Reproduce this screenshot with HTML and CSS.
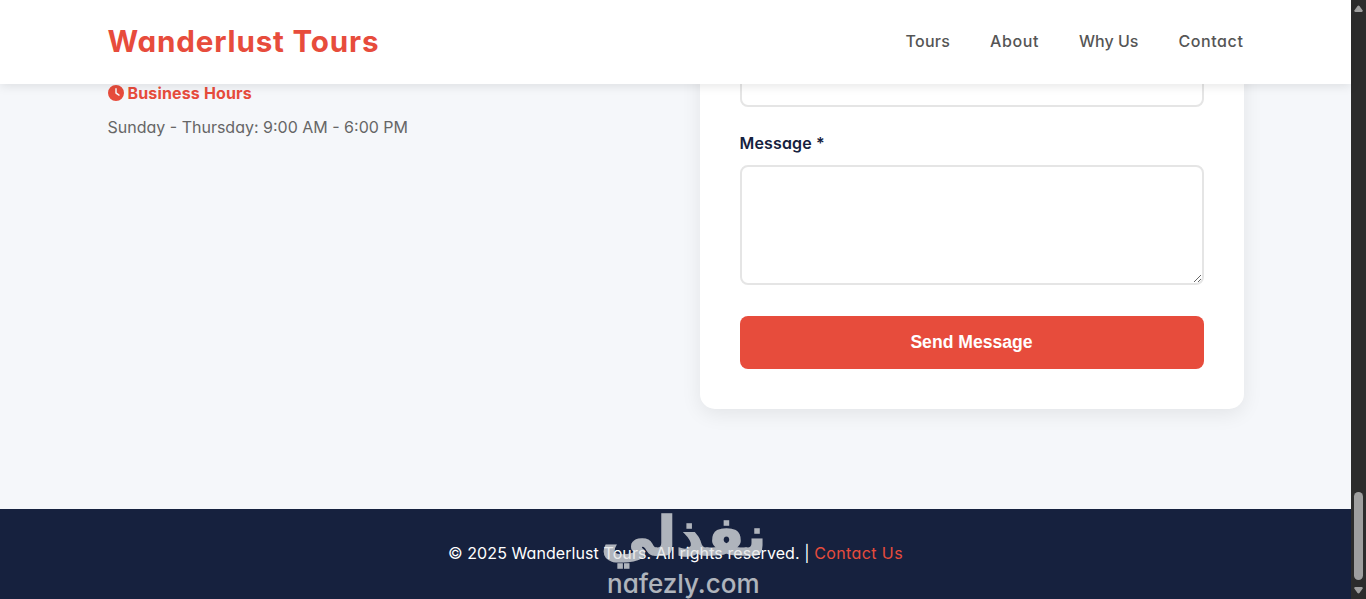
FILE: index.html
```html
<!DOCTYPE html>
<html lang="en">
<head>
    <meta charset="UTF-8">
    <meta name="viewport" content="width=device-width, initial-scale=1.0">
    <title>Wanderlust Tours</title>
    <link rel="stylesheet" href="styles.css">
</head>
<body>

<div class="page">
    <header class="header">
        <a class="logo" href="#">Wanderlust Tours</a>
        <nav class="nav">
            <a href="#tours">Tours</a>
            <a class="wide" href="#about">About</a>
            <a class="narrow" href="#why">Why Us</a>
            <a class="wide" href="#contact">Contact</a>
        </nav>
    </header>

    <section class="contact" id="contact">
        <div class="contact-info">
            <h3>
                <svg class="icon" viewBox="0 0 512 512"><path fill="currentColor" d="M256 0a256 256 0 1 1 0 512A256 256 0 1 1 256 0zM232 120V256c0 8 4 15.500 10.700 20l96 64c11 7.400 25.900 4.400 33.300-6.700s4.400-25.900-6.700-33.300L280 243.200V120c0-13.300-10.700-24-24-24s-24 10.700-24 24z"/></svg>
                <span>Business Hours</span>
            </h3>
            <p>Sunday - Thursday: 9:00 AM - 6:00 PM</p>
        </div>

        <form class="contact-form">
            <input type="text" id="subject" name="subject">
            <label for="message">Message *</label>
            <textarea id="message" name="message" required></textarea>
            <button type="button">Send Message</button>
        </form>
    </section>

    <footer class="footer">
        <p><span class="copyright">© 2025 Wanderlust Tours. All rights reserved. |</span> <a href="#contact">Contact Us</a></p>
        <div class="watermark">
            <span class="watermark-ar" lang="ar" dir="rtl">نفذلي</span>
            <span class="watermark-en">nafezly.com</span>
        </div>
    </footer>
</div>

<div class="scrollbar">
    <svg class="arrow" viewBox="0 0 9 7"><path d="M3.500 1Q4.500 0 5.500 1L8.700 5.500Q9 7 7.800 7H1.200Q0 7 .3 5.500Z"/></svg>
    <div class="thumb"></div>
    <svg class="arrow down" viewBox="0 0 9 7"><path d="M3.500 1Q4.500 0 5.500 1L8.700 5.500Q9 7 7.800 7H1.200Q0 7 .3 5.500Z"/></svg>
</div>

</body>
</html>
```

FILE: styles.css
```css
* {
    margin: 0;
    padding: 0;
    box-sizing: border-box;
}
body {
    display: flex;
    height: 599px;
    overflow: hidden;
    font-family: Inter, "Open Sans", sans-serif;
    font-feature-settings: "cv11";
    font-size: 16px;
    line-height: 1.6;
    color: #555;
    background-color: #f5f7fa;
}
a {
    text-decoration: none;
}
.page {
    flex: 1;
    display: flex;
    flex-direction: column;
    height: 599px;
}
.header {
    position: relative;
    z-index: 10;
    display: flex;
    flex-shrink: 0;
    justify-content: space-between;
    align-items: center;
    height: 84px;
    padding: 0 107.5px;
    background-color: #fff;
    box-shadow: 0 2px 10px rgba(0, 0, 0, 0.1);
}
.logo {
    font-size: 29.6px;
    font-weight: 700;
    letter-spacing: 0.83px;
    color: #e74c3c;
}
.nav {
    display: flex;
    gap: 40px;
}
.nav a {
    font-weight: 500;
    letter-spacing: 0.25px;
    color: #555;
}
.nav .wide {
    letter-spacing: 0.6px;
}
.nav .narrow {
    letter-spacing: 0;
}
.contact {
    display: grid;
    grid-template-columns: 1fr 1fr;
    gap: 48px;
    align-items: start;
    height: 425px;
    padding: 0 107.5px;
}
.contact-info h3 {
    display: flex;
    align-items: center;
    gap: 4px;
    margin: -3.500px 0 8.5px;
    font-size: 16px;
    letter-spacing: 0.15px;
    color: #e74c3c;
}
.icon {
    width: 16px;
    height: 16px;
}
.contact-info p {
    color: #666;
}
.contact-form {
    display: flex;
    flex-direction: column;
    margin-top: -68px;
    padding: 40px;
    background-color: #fff;
    border-radius: 15px;
    box-shadow: 0 5px 20px rgba(0, 0, 0, 0.08);
}
.contact-form label {
    margin: 24px 0 8px;
    font-weight: 600;
    letter-spacing: 0.15px;
    color: #16213e;
}
.contact-form input,
.contact-form textarea {
    height: 51px;
    border: 2px solid #e5e5e5;
    border-radius: 8px;
    background-color: #fff;
}
.contact-form textarea {
    height: 120px;
    resize: vertical;
}
.contact-form button {
    height: 53px;
    margin-top: 31px;
    border: none;
    border-radius: 8px;
    background-color: #e74c3c;
    color: #fff;
    font-family: "Liberation Sans", Arial, sans-serif;
    font-size: 17.6px;
    font-weight: 600;
    cursor: pointer;
}
.footer {
    position: relative;
    flex: 1;
    display: flex;
    justify-content: center;
    align-items: center;
    background-color: #16213e;
    color: #fff;
}
.copyright {
    letter-spacing: 0.08px;
}
.footer a {
    letter-spacing: 0.4px;
    color: #e74c3c;
}
.watermark {
    position: absolute;
    top: 0;
    left: 600px;
    width: 166px;
    height: 90px;
    color: #e3e5e6;
    opacity: 0.75;
}
.watermark span {
    position: absolute;
    white-space: nowrap;
}
.watermark-ar {
    top: -4px;
    left: 1px;
    font: bold 54px/1.2 "DejaVu Sans", sans-serif;
    -webkit-text-stroke: 1.5px #e3e5e6;
}
.watermark-en {
    top: 61px;
    left: 7px;
    font: 500 26px/1.1 Inter, sans-serif;
    font-feature-settings: "cv11";
}
.scrollbar {
    display: flex;
    flex-direction: column;
    align-items: center;
    width: 15px;
    height: 599px;
    padding: 5px 0;
    background-color: #2c2c2c;
}
.arrow {
    width: 9px;
    height: 7px;
    fill: #9f9f9f;
}
.arrow.down {
    margin-top: 7px;
    transform: rotate(180deg);
}
.thumb {
    width: 9px;
    height: 89px;
    margin-top: 480px;
    border-radius: 5px;
    background-color: #9f9f9f;
}
```
